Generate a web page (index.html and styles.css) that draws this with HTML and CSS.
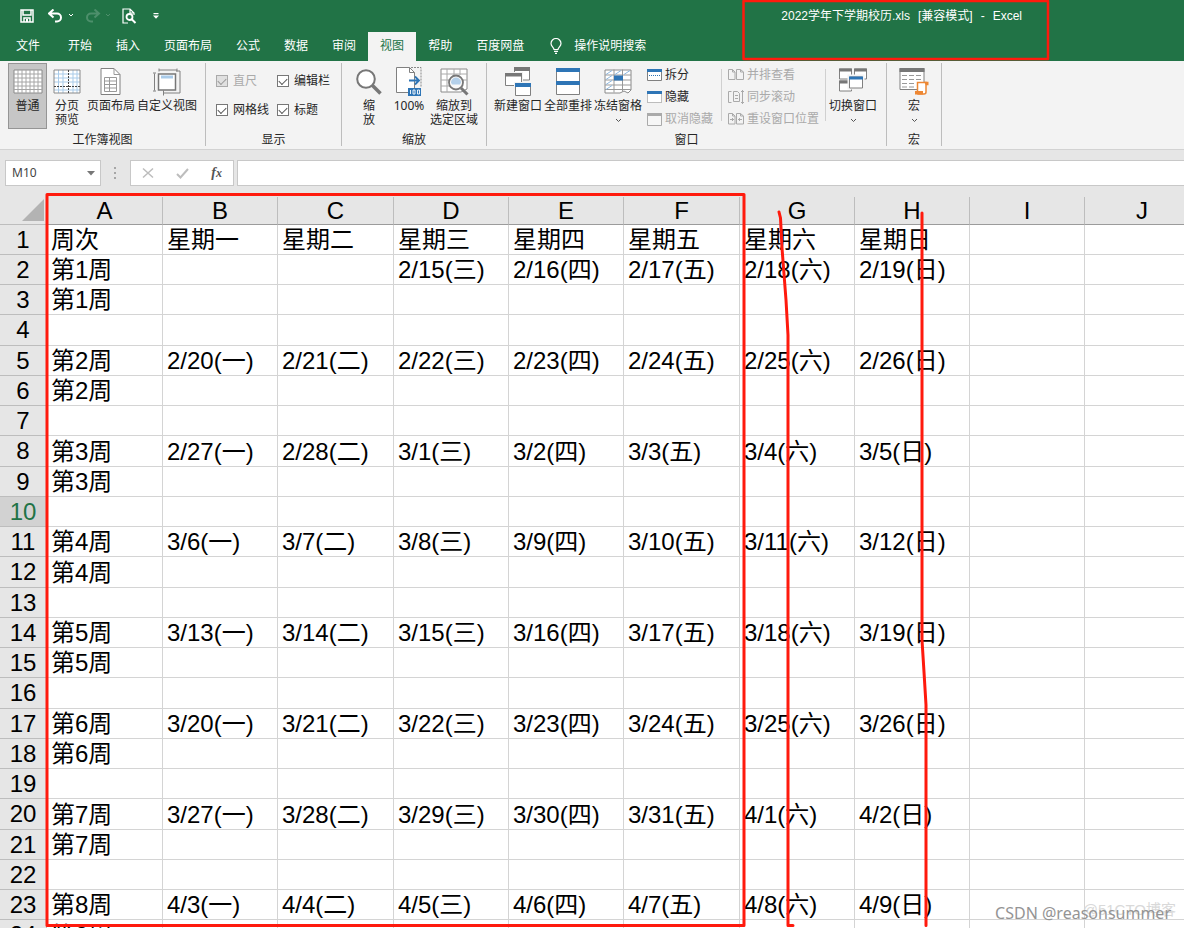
FILE: index.html
```html
<!DOCTYPE html>
<html lang="zh-CN">
<head>
<meta charset="utf-8">
<title>2022学年下学期校历.xls - Excel</title>
<link rel="stylesheet" href="styles.css">
</head>
<body>
<header class="top">
  <div class="titlebar">
    <div class="quick">
      <button class="qbtn" aria-label="保存"><svg width="14" height="14" viewBox="0 0 14 14"><path d="M1 1h12v12H1z M3 1v5h8V1 M4 13V9h6v4" fill="none" stroke="#fff" stroke-width="1.5"/><path d="M6 10h2v3H6z" fill="#fff"/></svg></button>
      <button class="qbtn undo" aria-label="撤消"><svg width="26" height="14" viewBox="0 0 26 14"><path d="M5.500 .5L1 4.500l4.500 4M1.500 4.500H9a4 4 0 0 1 0 8H7" fill="none" stroke="#fff" stroke-width="2"/><path d="M21 5l2 2 2-2" fill="none" stroke="#fff"/></svg></button>
      <button class="qbtn redo" aria-label="恢复" disabled><svg width="26" height="14" viewBox="0 0 26 14"><path d="M9.500 .5L14 4.500l-4.500 4M13.500 4.500H6a4 4 0 0 0 0 8h2" fill="none" stroke="#4d8f6b" stroke-width="2"/><path d="M21 5l2 2 2-2" fill="none" stroke="#4d8f6b"/></svg></button>
      <button class="qbtn preview" aria-label="打印预览"><svg width="15" height="16" viewBox="0 0 15 16"><path d="M6 15H1V1h7l4 4v2M8 1v4h4" fill="none" stroke="#fff" stroke-width="1.200"/><circle cx="7.500" cy="9" r="3" fill="none" stroke="#fff" stroke-width="1.800"/><path d="M9.500 11l4 4" stroke="#fff" stroke-width="2"/></svg></button>
      <button class="qbtn" aria-label="自定义快速访问工具栏"><svg width="6" height="6" viewBox="0 0 6 6"><path d="M.5 .6h5" stroke="#fff" stroke-width="1.200"/><path d="M0 2.500h6L3 5.800z" fill="#fff"/></svg></button>
    </div>
    <h1 class="doc"><span>2022学年下学期校历.xls</span><span>[兼容模式]</span><span>-</span><span>Excel</span></h1>
  </div>
  <nav class="tabs">
    <button class="tab file">文件</button>
    <button class="tab">开始</button>
    <button class="tab">插入</button>
    <button class="tab">页面布局</button>
    <button class="tab">公式</button>
    <button class="tab">数据</button>
    <button class="tab">审阅</button>
    <button class="tab active">视图</button>
    <button class="tab">帮助</button>
    <button class="tab">百度网盘</button>
    <button class="tab tell"><svg width="12" height="16" viewBox="0 0 12 16"><path d="M4 11.500C4 9.500 1 8.500 1 5.500a5 5 0 0 1 10 0c0 3-3 4-3 6zM4 13.300h4M5 15.300h2" fill="none" stroke="#fff" stroke-width="1.200"/></svg>操作说明搜索</button>
  </nav>
</header>

<section class="ribbon">
  <div class="group g-views">
    <div class="items">
      <button class="big pressed"><svg width="30" height="26" viewBox="0 0 30 26"><path d="M1 1h28v23H1z" fill="#fff" stroke="#8a8a8a"/><path d="M1 5h28M1 9h28M1 13h28M1 17h28M1 20.500h28M5 1v23M9 1v23M13 1v23M17 1v23M21 1v23M25 1v23" stroke="#a6a6a6" fill="none"/></svg>普通</button>
      <button class="big w40"><svg width="28" height="26" viewBox="0 0 28 26"><path d="M1 1h26v23H1z" fill="#fff"/><path d="M1 5h26M1 9h26M1 13h26M5.500 1v23M10 1v23M20 1v23M24 1v23M1 21h26" stroke="#a9cbe9" fill="none"/><path d="M1 1h26v23H1z" fill="none" stroke="#8a8a8a"/><path d="M15.500 1v23M1 17.500h26" stroke="#444" stroke-dasharray="2 1" fill="none"/></svg>分页<br>预览</button>
      <button class="big w48"><svg width="22" height="28" viewBox="0 0 22 28"><path d="M1 .5h13l6 6v20H1z" fill="#fff" stroke="#808080"/><path d="M14 .5v6h6M4.500 9.500h12v14h-12zM4.500 13h12M4.500 16.500h12M4.500 20h12M9.500 9.500v14" fill="none" stroke="#999"/></svg>页面布局</button>
      <button class="big w64"><svg width="28" height="27" viewBox="0 0 28 27"><path d="M6 1.500h18M6 0v3M24 0v3M1.500 5v17M0 4.500h3M0 22.500h3M23 2.500h4v22H10M10.500 22v5" fill="none" stroke="#808080"/><path d="M5.500 5.500h17v16h-17z" fill="#fff" stroke="#777" stroke-width="1.500"/><path d="M8 7h12v3H8z" fill="#a9cbe9"/></svg>自定义视图</button>
    </div>
    <div class="caption">工作簿视图</div>
  </div>

  <div class="group g-show">
    <div class="checks">
      <label class="off"><input type="checkbox" checked disabled>直尺</label>
      <label><input type="checkbox" checked>编辑栏</label>
      <label><input type="checkbox" checked>网格线</label>
      <label><input type="checkbox" checked>标题</label>
    </div>
    <div class="caption">显示</div>
  </div>

  <div class="group g-zoom">
    <div class="items">
      <button class="big w40"><svg width="28" height="28" viewBox="0 0 28 28"><path d="M17 17l8.500 8.500" stroke="#777" stroke-width="3.500"/><circle cx="11" cy="11" r="8.800" fill="#fff" stroke="#777" stroke-width="2"/></svg>缩<br>放</button>
      <button class="big w40"><svg width="26" height="30" viewBox="0 0 26 30"><path d="M.5 .5h13l5 5v20H.5z" fill="#fff" stroke="#808080"/><path d="M13.500 .5v5h5" fill="none" stroke="#808080"/><path d="M15 .5h10v19" fill="none" stroke="#888" stroke-dasharray="2 1"/><path d="M13 13.500h10M19 9.500l4 4-4 4" fill="none" stroke="#2e75b6" stroke-width="1.800"/><path d="M12 21h13v8H12z" fill="#2e75b6"/><path d="M14.500 23v4M17 23h2v4h-2zM21.500 23h2v4h-2z" fill="none" stroke="#fff" stroke-width=".9"/></svg>100%</button>
      <button class="big w50"><svg width="29" height="28" viewBox="0 0 29 28"><path d="M1 1h26v20l-6 3H1z" fill="#fff" stroke="#8a8a8a"/><path d="M1 6h26M1 12h26M1 18h10M7 1v23M14 1v6M20 1v6" stroke="#aaa" fill="none"/><path d="M21 20l6.500 6.500" stroke="#777" stroke-width="3"/><circle cx="16" cy="14.500" r="7" fill="#f8f8f8" stroke="#777" stroke-width="1.800"/><path d="M11 14.500a5 5 0 0 1 10 0l-1 2h-8z" fill="#b4d0ea"/></svg>缩放到<br>选定区域</button>
    </div>
    <div class="caption">缩放</div>
  </div>

  <div class="group g-window">
    <div class="items">
      <button class="big w50"><svg width="26" height="30" viewBox="0 0 26 30"><path d="M9.500 1h15v12h-15z" fill="#fff" stroke="#808080"/><path d="M9 0h16v4H9z" fill="#777"/><path d="M.5 6.500h16v12H.5z" fill="#fff" stroke="#f3f3f3" stroke-width="3"/><path d="M.5 6.500h16v12H.5z" fill="#fff" stroke="#808080"/><path d="M0 6h17v3.500H0z" fill="#777"/><path d="M10.500 16.500h15v12h-15z" fill="#fff" stroke="#f3f3f3" stroke-width="3"/><path d="M10.500 17.500h15v11h-15z" fill="#fff" stroke="#808080"/><path d="M10 16h16v4H10z" fill="#2e75b6"/></svg>新建窗口</button>
      <button class="big w50"><svg width="24" height="28" viewBox="0 0 24 28"><path d="M.5 .5h23v26H.5z" fill="#fff" stroke="#808080"/><path d="M0 0h24v4H0zM0 13h24v4H0z" fill="#2e75b6"/></svg>全部重排</button>
      <button class="big w50"><svg width="28" height="27" viewBox="0 0 28 27"><path d="M1 1.500h26v20l-3 3-4-2-4 2H1z" fill="#fff" stroke="#8a8a8a"/><path d="M1 6.500h26M1 11.500h26M1 16.500h26M10 1v23M18.500 1v22M1 21h26" stroke="#999" fill="none"/><path d="M2 6l6-4M11 6l6-4M20 6l6-4M2 11l6-4M2 16l6-4M2 21l6-4" stroke="#8db8e0"/><path d="M10 7h9v5h-9z" fill="#2e75b6"/></svg>冻结窗格<svg class="chev" width="7" height="5" viewBox="0 0 7 5"><path d="M1 1l2.500 2.500L6 1" fill="none" stroke="#555"/></svg></button>
    </div>
    <div class="smalls">
      <button class="small"><svg width="15" height="12" viewBox="0 0 15 12"><path d="M.5 .5h14v11H.5z" fill="#fff" stroke="#808080"/><path d="M0 0h15v3H0z" fill="#2e75b6"/><path d="M2 6.500h11" stroke="#2e75b6" stroke-dasharray="1 1"/></svg>拆分</button>
      <button class="small"><svg width="15" height="12" viewBox="0 0 15 12"><path d="M.5 .5h14v11H.5z" fill="#fff" stroke="#808080" stroke-dasharray="1 1"/><path d="M0 0h15v3H0z" fill="#2e75b6"/></svg>隐藏</button>
      <button class="small" disabled><svg width="15" height="13" viewBox="0 0 15 13"><path d="M.5 .5h14v12H.5z" fill="#f6f6f6" stroke="#aaa"/><path d="M0 0h15v3H0z" fill="#aaa"/></svg>取消隐藏</button>
    </div>
    <div class="smalls sep">
      <button class="small" disabled><svg width="16" height="12" viewBox="0 0 16 12"><path d="M.5 .5h4L7 3v7.500H.5zM8.500 .5h4L15.500 3v7.500h-7zM4.500 .5V3H7M12.500 .5V3h3" fill="none" stroke="#aaa"/></svg>并排查看</button>
      <button class="small" disabled><svg width="16" height="14" viewBox="0 0 16 14"><path d="M3.500 1.500h-3v11h3M5.500 1.500h4l2 2v8h-6zM7 5.500h3M7 8.500h3M14.500 0v14M13 2l1.500-1.500L16 2M13 12l1.500 1.500L16 12" fill="none" stroke="#aaa"/></svg>同步滚动</button>
      <button class="small" disabled><svg width="16" height="12" viewBox="0 0 16 12"><path d="M.5 .5h4l2.500 2.500v8H.5zM8.500 .5h4L15.500 3v8h-7zM4.500 .5V3H7M12.500 .5V3h3M2 6.500h4M10 6.500h4M4.500 5v3M11.500 5v3" fill="none" stroke="#aaa"/></svg>重设窗口位置</button>
    </div>
    <div class="items sep last">
      <button class="big w50"><svg width="28" height="27" viewBox="0 0 28 27"><path d="M.5 .5h12v10H.5zM15.500 .5h12v10h-12zM.5 12.500h12v10H.5z" fill="#fff" stroke="#808080"/><path d="M0 0h13v3H0zM15 0h13v3H15zM0 12h13v3H0z" fill="#777"/><path d="M10 7.500h14v12H10z" fill="#fff" stroke="#f3f3f3" stroke-width="3"/><path d="M10.500 8.500h13v11h-13z" fill="#fff" stroke="#808080"/><path d="M10 8h14v3H10z" fill="#2e75b6"/></svg>切换窗口<svg class="chev" width="7" height="5" viewBox="0 0 7 5"><path d="M1 1l2.500 2.500L6 1" fill="none" stroke="#555"/></svg></button>
    </div>
    <div class="caption">窗口</div>
  </div>

  <div class="group g-macro">
    <div class="items">
      <button class="big w40"><svg width="30" height="28" viewBox="0 0 30 28"><path d="M1 .5h24v21H1z" fill="#fff" stroke="#808080"/><path d="M.5 0h25v4H.5z" fill="#777"/><path d="M3 7.500h5M10 7.500h5M17 7.500h5M3 11.500h5M10 11.500h5M17 11.500h5M3 15.500h5M10 15.500h5M3 19h5M10 19h5" stroke="#999"/><path d="M18.500 23.500V14.500H27v9.500q0 2-2 2h-6z" fill="#fff" stroke="#ed8733" stroke-width="1.500"/><path d="M16 23h8v3.500h-8zM25 13.800h4.500v3.500H27z" fill="#ed8733"/></svg>宏<svg class="chev" width="7" height="5" viewBox="0 0 7 5"><path d="M1 1l2.500 2.500L6 1" fill="none" stroke="#555"/></svg></button>
    </div>
    <div class="caption">宏</div>
  </div>
</section>

<section class="formula">
  <div class="namebox"><input type="text" value="M10" aria-label="名称框"><button aria-label="展开名称框"><svg width="8" height="5" viewBox="0 0 8 5"><path d="M0 0h8L4 4.500z" fill="#777"/></svg></button></div>
  <svg class="dots" width="2" height="12" viewBox="0 0 2 12"><path d="M0 0h2v2H0zM0 5h2v2H0zM0 10h2v2H0z" fill="#a6a6a6"/></svg>
  <div class="fxbox">
    <button aria-label="取消"><svg width="12" height="12" viewBox="0 0 12 12"><path d="M1 1.500l10 9M11 1.500l-10 9" stroke="#bdbdbd" stroke-width="1.500"/></svg></button>
    <button aria-label="输入"><svg width="13" height="11" viewBox="0 0 13 11"><path d="M1 6l3.500 3.500L12 1" fill="none" stroke="#bdbdbd" stroke-width="2"/></svg></button>
    <button class="fx" aria-label="插入函数">f<span>x</span></button>
  </div>
  <input class="entry" type="text" aria-label="编辑栏">
</section>

<main class="sheet">
<table class="grid">
<colgroup><col class="rowcol"><col class="wide"><col><col class="wide"><col><col><col class="wide"><col><col><col><col></colgroup>
<thead><tr><th class="corner"><svg width="22" height="22" viewBox="0 0 22 22"><path d="M22 0v22H0z" fill="#b3b3b3"/></svg></th><th>A</th><th>B</th><th>C</th><th>D</th><th>E</th><th>F</th><th>G</th><th>H</th><th>I</th><th>J</th></tr></thead>
<tbody>
<tr><th>1</th><td>周次</td><td>星期一</td><td>星期二</td><td>星期三</td><td>星期四</td><td>星期五</td><td>星期六</td><td>星期日</td><td></td><td></td></tr>
<tr><th>2</th><td>第1周</td><td></td><td></td><td>2/15(三)</td><td>2/16(四)</td><td>2/17(五)</td><td>2/18(六)</td><td>2/19(日)</td><td></td><td></td></tr>
<tr><th>3</th><td>第1周</td><td></td><td></td><td></td><td></td><td></td><td></td><td></td><td></td><td></td></tr>
<tr><th>4</th><td></td><td></td><td></td><td></td><td></td><td></td><td></td><td></td><td></td><td></td></tr>
<tr><th>5</th><td>第2周</td><td>2/20(一)</td><td>2/21(二)</td><td>2/22(三)</td><td>2/23(四)</td><td>2/24(五)</td><td>2/25(六)</td><td>2/26(日)</td><td></td><td></td></tr>
<tr><th>6</th><td>第2周</td><td></td><td></td><td></td><td></td><td></td><td></td><td></td><td></td><td></td></tr>
<tr><th>7</th><td></td><td></td><td></td><td></td><td></td><td></td><td></td><td></td><td></td><td></td></tr>
<tr><th>8</th><td>第3周</td><td>2/27(一)</td><td>2/28(二)</td><td>3/1(三)</td><td>3/2(四)</td><td>3/3(五)</td><td>3/4(六)</td><td>3/5(日)</td><td></td><td></td></tr>
<tr><th>9</th><td>第3周</td><td></td><td></td><td></td><td></td><td></td><td></td><td></td><td></td><td></td></tr>
<tr class="current"><th>10</th><td></td><td></td><td></td><td></td><td></td><td></td><td></td><td></td><td></td><td></td></tr>
<tr><th>11</th><td>第4周</td><td>3/6(一)</td><td>3/7(二)</td><td>3/8(三)</td><td>3/9(四)</td><td>3/10(五)</td><td>3/11(六)</td><td>3/12(日)</td><td></td><td></td></tr>
<tr><th>12</th><td>第4周</td><td></td><td></td><td></td><td></td><td></td><td></td><td></td><td></td><td></td></tr>
<tr><th>13</th><td></td><td></td><td></td><td></td><td></td><td></td><td></td><td></td><td></td><td></td></tr>
<tr><th>14</th><td>第5周</td><td>3/13(一)</td><td>3/14(二)</td><td>3/15(三)</td><td>3/16(四)</td><td>3/17(五)</td><td>3/18(六)</td><td>3/19(日)</td><td></td><td></td></tr>
<tr><th>15</th><td>第5周</td><td></td><td></td><td></td><td></td><td></td><td></td><td></td><td></td><td></td></tr>
<tr><th>16</th><td></td><td></td><td></td><td></td><td></td><td></td><td></td><td></td><td></td><td></td></tr>
<tr><th>17</th><td>第6周</td><td>3/20(一)</td><td>3/21(二)</td><td>3/22(三)</td><td>3/23(四)</td><td>3/24(五)</td><td>3/25(六)</td><td>3/26(日)</td><td></td><td></td></tr>
<tr><th>18</th><td>第6周</td><td></td><td></td><td></td><td></td><td></td><td></td><td></td><td></td><td></td></tr>
<tr><th>19</th><td></td><td></td><td></td><td></td><td></td><td></td><td></td><td></td><td></td><td></td></tr>
<tr><th>20</th><td>第7周</td><td>3/27(一)</td><td>3/28(二)</td><td>3/29(三)</td><td>3/30(四)</td><td>3/31(五)</td><td>4/1(六)</td><td>4/2(日)</td><td></td><td></td></tr>
<tr><th>21</th><td>第7周</td><td></td><td></td><td></td><td></td><td></td><td></td><td></td><td></td><td></td></tr>
<tr><th>22</th><td></td><td></td><td></td><td></td><td></td><td></td><td></td><td></td><td></td><td></td></tr>
<tr><th>23</th><td>第8周</td><td>4/3(一)</td><td>4/4(二)</td><td>4/5(三)</td><td>4/6(四)</td><td>4/7(五)</td><td>4/8(六)</td><td>4/9(日)</td><td></td><td></td></tr>
<tr><th>24</th><td>第8周</td><td></td><td></td><td></td><td></td><td></td><td></td><td></td><td></td><td></td></tr>
</tbody>
</table>
</main>

<svg class="marks" width="1184" height="928" viewBox="0 0 1184 928" aria-hidden="true">
  <g fill="none" stroke="#ff1a0d" stroke-width="3" stroke-linecap="round" stroke-linejoin="round">
    <rect x="743.500" y="1" width="304.500" height="58" stroke-width="2.500"/>
    <rect x="47" y="194.500" width="697" height="731"/>
    <path d="M779 212L780.500 218 782 248 786 300 788 335V925.500H793"/>
    <path d="M922 213V640L924 672 926 705V925.500"/>
  </g>
</svg>
<div class="mark-site">@51CTO博客</div>
<div class="mark-author">CSDN @reasonsummer</div>
</body>
</html>
```
FILE: styles.css
```css
* { box-sizing: border-box; }
body {
  margin: 0;
  height: 100vh;
  display: flex;
  flex-direction: column;
  overflow: hidden;
  position: relative;
  background: #fff;
  color: #262626;
  font: 12px/14px "Noto Sans", "Noto Sans CJK SC", sans-serif;
}
button {
  margin: 0;
  padding: 0;
  border: 0;
  background: none;
  color: inherit;
  font: inherit;
  white-space: nowrap;
}
svg { display: block; flex: none; }

.top { flex: none; background: #217346; color: #fff; }
.titlebar { height: 32px; display: flex; align-items: center; justify-content: space-between; }
.quick { display: flex; align-items: center; padding-left: 20px; }
.undo { margin-left: 14px; }
.redo { margin-left: 11px; }
.preview { margin-left: 11px; margin-right: 16px; }
.doc { display: flex; gap: 8px; margin: 0; padding-right: 162px; font: 12px/14px "Liberation Sans", "Noto Sans CJK SC", sans-serif; }

.tabs { display: flex; height: 29px; padding-left: 4px; }
.tab { padding: 0 12px 2px; }
.file { margin-right: 4px; }
.active { background: #f3f3f3; color: #217346; }
.tell { display: flex; align-items: center; gap: 12px; padding-left: 14px; }

.ribbon { flex: none; display: flex; height: 89px; padding-top: 2px; background: #f3f3f3; border-bottom: 1px solid #d2d2d2; }
.group { position: relative; display: flex; align-items: flex-start; height: 83px; border-right: 1px solid #bdbdbd; }
.caption { position: absolute; left: 0; right: 0; bottom: 0; line-height: 12px; text-align: center; }
.items { display: flex; align-items: flex-start; }
.big { display: flex; flex-direction: column; align-items: center; height: 66px; padding-top: 4px; text-align: center; }
.big > svg:first-child { height: 30px; margin-bottom: 2px; }
.big .chev { margin-top: 5px; }
.pressed { width: 39px; padding-top: 3px; border: 1px solid #959595; background: #c6c6c6; }
.w40 { width: 40px; }
.w48 { width: 48px; }
.w50 { width: 50px; }
.w64 { width: 64px; }
.g-views { width: 206px; padding-left: 8px; }
.g-show { width: 136px; padding-left: 10px; }
.g-zoom { width: 145px; padding-left: 7px; }
.g-window { width: 400px; padding-left: 6px; }
.g-macro { width: 55px; padding-left: 7px; }

.checks { display: grid; grid-template-columns: 61px auto; row-gap: 15px; padding-top: 11px; }
.checks label { display: flex; align-items: center; gap: 5px; white-space: nowrap; }
.checks input {
  appearance: none;
  width: 12px;
  height: 12px;
  margin: 0;
  border: 1px solid #777;
  background: #fff;
  display: grid;
  place-items: center;
}
.checks input::before { content: ""; width: 7px; height: 4px; margin-bottom: 2px; border: solid #555; border-width: 0 0 1px 1px; transform: rotate(-45deg); }
.checks .off { color: #aaa; }
.checks .off input { background: #e0e0e0; border-color: #aaa; }
.checks .off input::before { border-color: #999; }

.smalls { display: flex; flex-direction: column; gap: 8px; margin-top: 5px; padding-left: 4px; }
.small { display: flex; align-items: center; gap: 3px; height: 14px; }
.small:disabled { color: #aaa; }
.sep { position: relative; margin-left: 8px; padding-left: 7px; }
.sep::before { content: ""; position: absolute; left: 0; top: 6px; width: 1px; height: 52px; background: #d0d0d0; }
.smalls.sep::before { top: 1px; }
.sep.last { margin-left: 6px; padding-left: 3px; }

.formula { flex: none; display: flex; align-items: center; height: 36px; padding: 10px 0 0 5px; background: #e6e6e6; }
.namebox { display: flex; align-items: center; width: 96px; height: 26px; padding-right: 5px; background: #fff; border: 1px solid #c8c8c8; }
.namebox input { flex: 1; min-width: 0; border: 0; padding: 0 0 0 6px; font: inherit; color: #444; background: none; }
.dots { margin: 0 14px 0 13px; }
.fxbox { display: flex; align-items: center; justify-content: space-between; width: 104px; height: 26px; padding: 0 11px; background: #fff; border: 1px solid #c8c8c8; }
.fx { font: italic bold 14px/16px "Liberation Serif", serif; color: #555; }
.fx span { font-size: 12px; }
.entry { flex: 1; min-width: 0; height: 26px; margin-left: 3px; border: 1px solid #c8c8c8; border-right: 0; background: #fff; font: inherit; }

.sheet { flex: 1; min-height: 0; overflow: hidden; }
.grid {
  width: 1200px;
  table-layout: fixed;
  border-collapse: separate;
  border-spacing: 0;
  font: 24px/28px "Liberation Sans", "Noto Sans CJK SC", sans-serif;
  color: #000;
}
col { width: 115px; }
.wide { width: 116px; }
.rowcol { width: 47px; }
.grid th, .grid td { padding: 0; height: 30px; border: solid #d4d4d4; border-width: 0 1px 1px 0; overflow: hidden; white-space: nowrap; }
.grid td { padding-left: 4px; line-height: 29px; }
.grid th { background: #e6e6e6; font-weight: 400; border-color: #bdbdbd; }
.grid tbody tr:nth-child(4n) > * { height: 31px; }
.grid thead th { height: 39px; padding-top: 11px; line-height: 26px; border-color: #9b9b9b; border-right-color: transparent; background: linear-gradient(#bdbdbd, #bdbdbd) right bottom / 1px 28px no-repeat #e6e6e6; background-origin: border-box; background-clip: border-box; }
.grid thead .corner { padding: 9px 0 0 22px; background: #e6e6e6; border-bottom-color: #bdbdbd; }
.grid .current th { background: #d2d2d2; color: #217346; }

.marks { position: absolute; left: 0; top: 0; pointer-events: none; }
.mark-site, .mark-author { position: absolute; white-space: nowrap; }
.mark-site { right: 8px; bottom: 8px; font: 15px/20px "Liberation Sans", "Noto Sans CJK SC", sans-serif; color: #d9d9d9; }
.mark-author { right: 13px; bottom: 5px; font: 16px/20px "Noto Sans", sans-serif; color: #949494; }
```
